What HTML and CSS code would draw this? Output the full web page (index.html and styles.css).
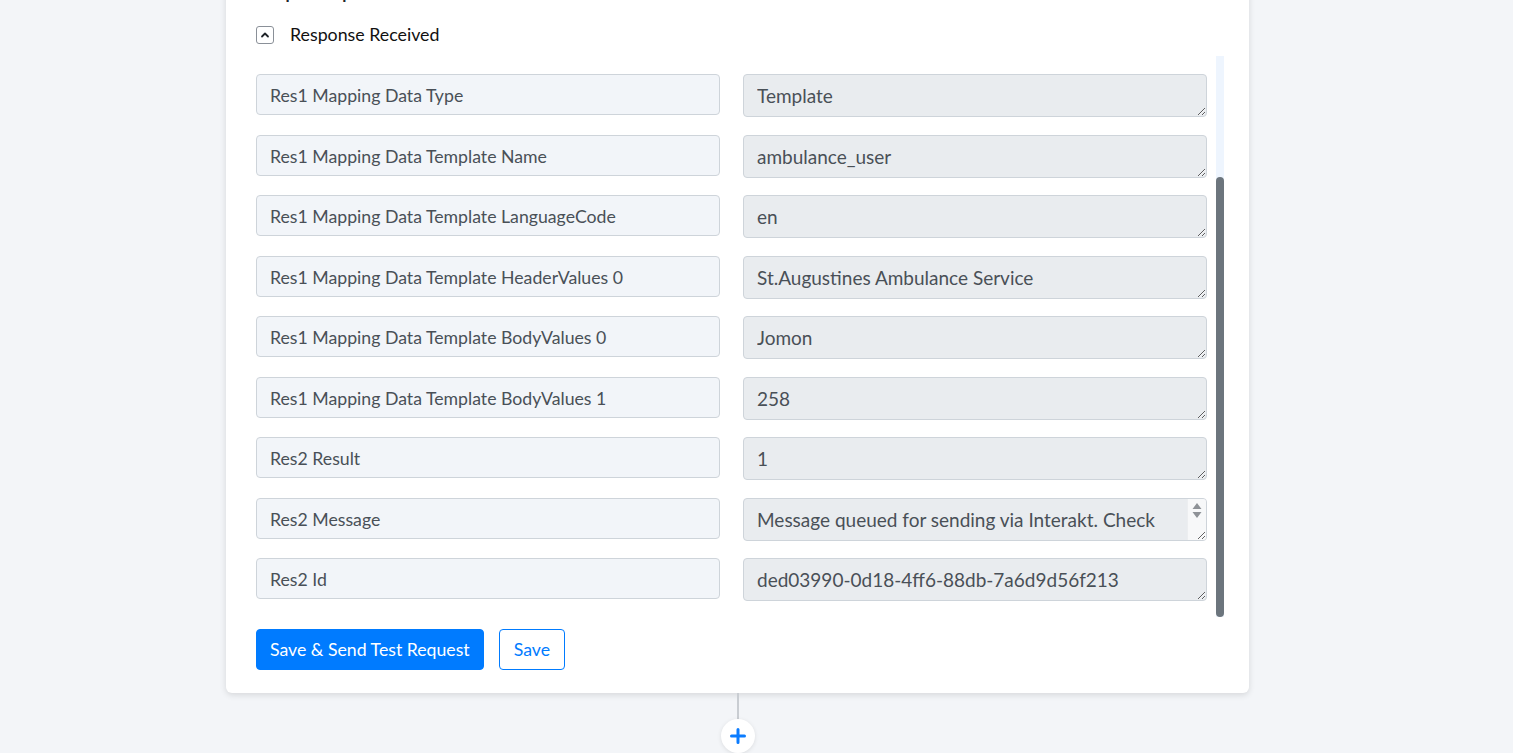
FILE: index.html
```html
<!DOCTYPE html>
<html>
<head>
	<meta http-equiv="Content-Type" content="text/html; charset=utf-8" />
	<title>Response Received</title>
	<link rel="stylesheet" href="styles.css">
</head>
<body>
	<div class="workflow">
		<!-- step card -->
		<div class="step-card">
			<h4 class="step-heading">Output Response</h4>

			<div class="toggle-row">
				<button class="toggle-btn" type="button">
					<svg width="10" height="10" viewBox="0 0 10 10"><path d="M2 6.5 L5 3.5 L8 6.5" fill="none" stroke="#1f2328" stroke-width="1.8" stroke-linecap="round" stroke-linejoin="round"/></svg>
				</button>
				<span class="toggle-label">Response Received</span>
			</div>

			<div class="mapping-list">
				<div class="mapping-rows">
					<div class="mapping-row">
						<div class="field-name">Res1 Mapping Data Type</div>
						<div class="field-value"><span class="value-text">Template</span></div>
					</div>
					<div class="mapping-row">
						<div class="field-name">Res1 Mapping Data Template Name</div>
						<div class="field-value"><span class="value-text">ambulance_user</span></div>
					</div>
					<div class="mapping-row">
						<div class="field-name">Res1 Mapping Data Template LanguageCode</div>
						<div class="field-value"><span class="value-text">en</span></div>
					</div>
					<div class="mapping-row">
						<div class="field-name">Res1 Mapping Data Template HeaderValues 0</div>
						<div class="field-value"><span class="value-text">St.Augustines Ambulance Service</span></div>
					</div>
					<div class="mapping-row">
						<div class="field-name">Res1 Mapping Data Template BodyValues 0</div>
						<div class="field-value"><span class="value-text">Jomon</span></div>
					</div>
					<div class="mapping-row">
						<div class="field-name">Res1 Mapping Data Template BodyValues 1</div>
						<div class="field-value"><span class="value-text">258</span></div>
					</div>
					<div class="mapping-row">
						<div class="field-name">Res2 Result</div>
						<div class="field-value"><span class="value-text">1</span></div>
					</div>
					<div class="mapping-row">
						<div class="field-name">Res2 Message</div>
						<div class="field-value has-scroll">
							<span class="value-text">Message queued for sending via Interakt. Check</span>
							<span class="scroll-gutter">
								<svg width="10" height="18" viewBox="0 0 10 18"><path d="M5 1 L9.5 7 H0.5 Z M0.5 10 H9.5 L5 16 Z" fill="#8e9297"/></svg>
							</span>
						</div>
					</div>
					<div class="mapping-row">
						<div class="field-name">Res2 Id</div>
						<div class="field-value"><span class="value-text">ded03990-0d18-4ff6-88db-7a6d9d56f213</span></div>
					</div>
				</div>
				<div class="list-scrollbar"><div class="list-thumb"></div></div>
			</div>

			<div class="actions">
				<button class="btn btn-primary" type="button">Save &amp; Send Test Request</button>
				<button class="btn btn-outline" type="button">Save</button>
			</div>
		</div>

		<!-- add next step -->
		<div class="connector">
			<div class="connector-line"></div>
			<button class="add-step" type="button">
				<svg width="16" height="16" viewBox="0 0 16 16"><path d="M8 1.5 V14.5 M1.5 8 H14.5" stroke="#0b7cff" stroke-width="3" stroke-linecap="round"/></svg>
			</button>
		</div>
	</div>
</body>
</html>
```

FILE: styles.css
```css
body {
    margin: 0;
    background-color: #f3f5f8;
    font-family: Lato, "Open Sans", sans-serif;
    color: #212529;
    overflow: hidden;
}

.workflow {
    width: 1023px;
    margin-left: 226px;
}

.step-card {
    box-sizing: border-box;
    width: 1023px;
    margin-top: -35px;
    padding: 16px 25px 23px 30px;
    background-color: #fff;
    border-radius: 0 0 6px 6px;
    box-shadow: 0 2px 6px rgba(0, 0, 0, 0.12);
}

.step-heading {
    margin: 0;
    font-size: 17px;
    line-height: 24px;
    font-weight: 700;
}

.toggle-row {
    display: flex;
    align-items: center;
    margin-top: 21px;
    height: 18px;
}

.toggle-btn {
    display: flex;
    align-items: center;
    justify-content: center;
    box-sizing: border-box;
    width: 18px;
    height: 18px;
    padding: 0;
    background: #fff;
    border: 1px solid #8a9098;
    border-radius: 3px;
}

.toggle-label {
    margin-left: 16px;
    font-size: 17.8px;
    line-height: 18px;
    margin-top: -2px;
    color: #111;
}

/* list with its own slim scrollbar on the right */
.mapping-list {
    display: flex;
    margin-top: 12px;
    height: 561px;
}

.mapping-rows {
    display: flex;
    flex-direction: column;
    gap: 17.5px;
    width: 951px;
    padding: 18px 9px 0 0;
    overflow: hidden;
}

.list-scrollbar {
    display: flex;
    flex-direction: column;
    width: 8px;
    padding-top: 121px;
    background-color: #eef5fe;
}

.list-thumb {
    flex: 1;
    background-color: #6c757d;
    border-radius: 4px;
}

.mapping-row {
    display: grid;
    grid-template-columns: 464px 464px;
    column-gap: 23px;
    align-items: start;
}

.field-name,
.field-value {
    box-sizing: border-box;
    color: #495057;
    border: 1px solid #ced4da;
    border-radius: 4px;
}

.field-name {
    height: 41px;
    padding: 1px 13px 0;
    font-size: 17.7px;
    line-height: 39px;
    background-color: #f2f5f9;
    white-space: nowrap;
}

.field-value {
    display: flex;
    height: 43px;
    padding-left: 13px;
    font-size: 19px;
    line-height: 24px;
    background-color: #e9ecef;
    resize: vertical;
    overflow: hidden;
}

.value-text {
    flex: 1;
    height: 24px;
    margin-top: 9px;
    padding-right: 13px;
    overflow: hidden;
}

.scroll-gutter {
    display: flex;
    justify-content: center;
    width: 18px;
    padding-top: 3px;
    background-color: #f7f8f9;
    border-left: 1px solid #eceef0;
}

.actions {
    display: flex;
    gap: 15px;
    margin-top: 12px;
}

.btn {
    height: 41px;
    padding: 0 13px;
    font-family: Lato, "Open Sans", sans-serif;
    font-size: 17.7px;
    border-radius: 4px;
    cursor: pointer;
}

.btn-primary {
    background-color: #007bff;
    color: #fff;
    border: 1px solid #007bff;
}

.btn-outline {
    padding: 0 14px;
    background-color: #fff;
    color: #007bff;
    border: 1px solid #007bff;
}

.connector {
    display: flex;
    flex-direction: column;
    align-items: center;
}

.connector-line {
    width: 2px;
    height: 27px;
    background-color: #c9cdd2;
}

.add-step {
    display: flex;
    align-items: center;
    justify-content: center;
    width: 34px;
    height: 34px;
    padding: 0;
    margin-top: -1px;
    background: #fff;
    border: none;
    border-radius: 50%;
    box-shadow: 0 1px 4px rgba(0, 0, 0, 0.1);
}
```
